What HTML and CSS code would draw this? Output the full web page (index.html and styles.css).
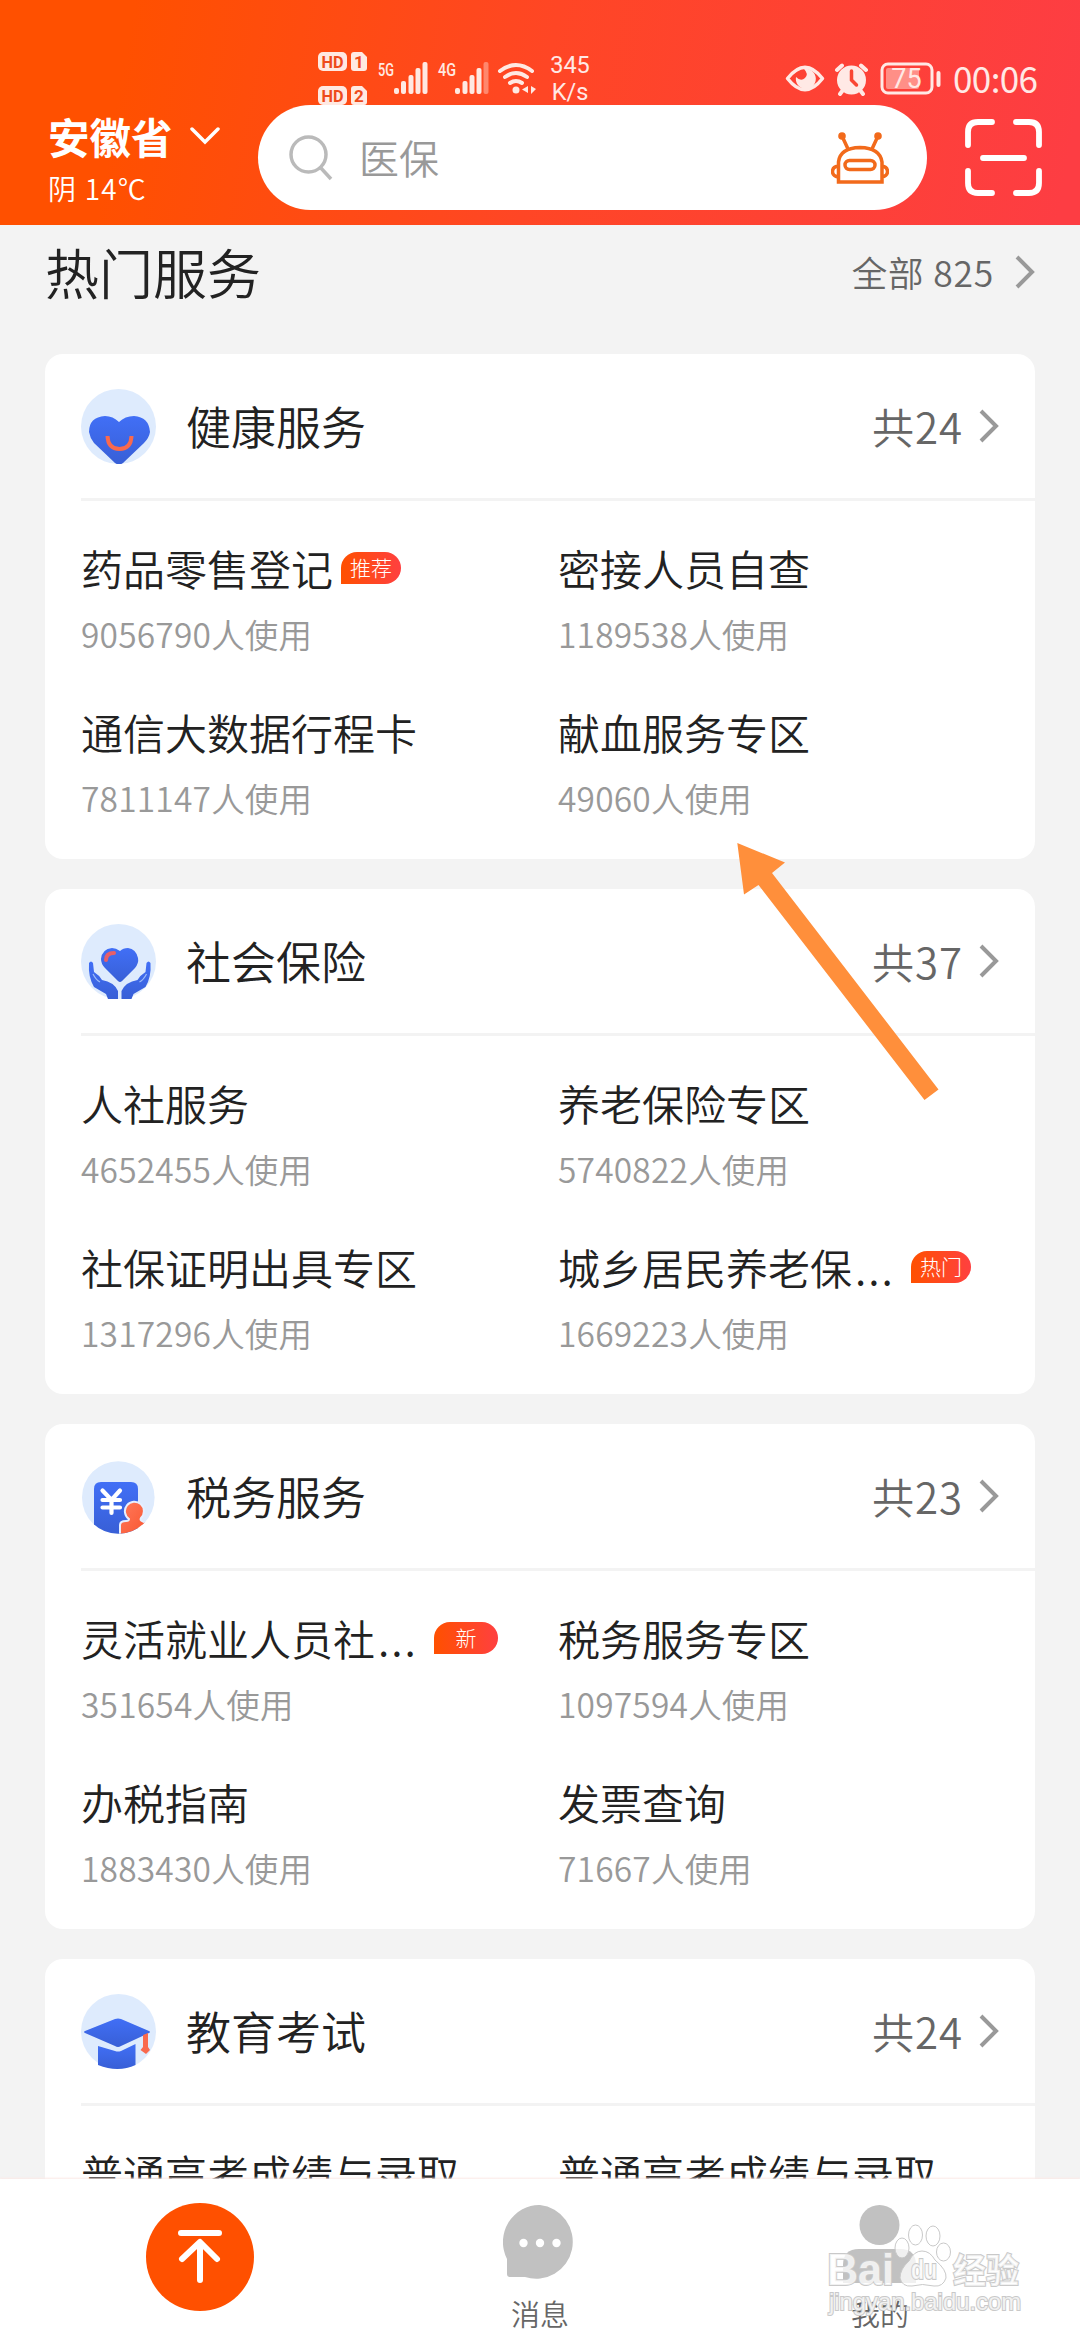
FILE: index.html
```html
<!DOCTYPE html>
<html lang="zh-CN">
<head>
<meta charset="utf-8">
<title>热门服务</title>
<link rel="stylesheet" href="styles.css">
</head>
<body>
<svg class="defs" width="0" height="0" aria-hidden="true">
  <defs>
    <linearGradient id="blue" x1="0" y1="0" x2="0" y2="1"><stop offset="0" stop-color="#416ff6"/><stop offset="1" stop-color="#385fd6"/></linearGradient>
    <linearGradient id="coral" x1="0" y1="0" x2="1" y2="1"><stop offset="0" stop-color="#ff7a5c"/><stop offset="1" stop-color="#f9552f"/></linearGradient>
    <clipPath id="disc"><circle cx="37.3" cy="38.5" r="36.3"/></clipPath>
    <symbol id="chev" viewBox="0 0 20 36"><path d="M2 3L17 18L2 33" fill="none" stroke="#999" stroke-width="4"/></symbol>
  </defs>
</svg>
<header class="header">
  <div class="status">
    <svg class="signals" width="222" height="55" viewBox="318 50 222 55">
      <g fill="#ffe9e2">
        <rect x="318" y="52" width="29" height="19" rx="5"/><path d="M354 52h8l5 5v11a3 3 0 0 1-3 3h-10a3 3 0 0 1-3-3v-13a3 3 0 0 1 3-3z"/>
        <rect x="318" y="86" width="29" height="19" rx="5"/><path d="M354 86h8l5 5v11a3 3 0 0 1-3 3h-10a3 3 0 0 1-3-3v-13a3 3 0 0 1 3-3z"/>
        <rect x="394" y="88" width="5" height="6" rx="2"/><rect x="401" y="81" width="5" height="13" rx="2"/><rect x="408.500" y="75" width="5" height="19" rx="2"/><rect x="415.500" y="68" width="5" height="26" rx="2"/><rect x="422.500" y="62" width="5" height="32" rx="2"/>
        <rect x="455" y="88" width="5" height="6" rx="2"/><rect x="462.500" y="81" width="5" height="13" rx="2"/><rect x="469.500" y="75" width="5" height="19" rx="2"/><rect x="476.500" y="68" width="5" height="26" rx="2"/><rect x="483.500" y="62" width="5" height="32" rx="2" opacity=".4"/>
        <circle cx="516" cy="90" r="3.500"/><path d="M528 86v7l-6-3.500zM531 86v8l5-5z"/>
      </g>
      <g fill="none" stroke="#ffe9e2" stroke-width="4" stroke-linecap="round"><path d="M500 71q16-12 32 0M505 77q11-8 22 0M510 83q6-4 12 0"/></g>
      <g class="hd" fill="#ee4a1b" text-anchor="middle"><text x="332.500" y="68" textLength="22" lengthAdjust="spacingAndGlyphs">HD</text><text x="359" y="68">1</text><text x="332.500" y="102" textLength="22" lengthAdjust="spacingAndGlyphs">HD</text><text x="359" y="102">2</text></g>
      <g class="net" fill="#ffe9e2"><text x="378" y="76" textLength="16" lengthAdjust="spacingAndGlyphs">5G</text><text x="438" y="76" textLength="18" lengthAdjust="spacingAndGlyphs">4G</text></g>
    </svg>
    <div class="speed"><span>345</span><span>K/s</span></div>
    <svg class="indicators" width="156" height="36" viewBox="784 60 156 36">
      <path d="M786.500 78.500Q804 56 821.500 78.500Q804 101 786.500 78.500Z" fill="none" stroke="#ffe9e5" stroke-width="3.500" stroke-linejoin="round"/>
      <path d="M803 69a10 10 0 1 1-8 8q5 5 9 1t-1-9z" fill="#ffe9e5"/>
      <circle cx="850.500" cy="80" r="14.500" fill="#ffe9e5"/><path d="M850.500 71v9l5 5" fill="none" stroke="#fa4633" stroke-width="3.500" stroke-linecap="round"/>
      <path d="M836 70l5-4.500M865 70l-5-4.500M839 94l3-4M862 94l-3-4" stroke="#ffe9e5" stroke-width="4" stroke-linecap="round"/>
      <rect x="881" y="64" width="50" height="29" rx="6" fill="none" stroke="#ffe9e5" stroke-width="3"/><rect x="885" y="68" width="33" height="21" rx="2" fill="#ff8f87"/><rect x="935.500" y="71" width="4" height="16" rx="2" fill="#ffe9e5"/>
      <text class="battery" x="905.500" y="88" text-anchor="middle" fill="#ffe9e5">75</text>
    </svg>
    <time class="clock">00:06</time>
  </div>
  <div class="toolbar">
    <div class="place">
      <div class="province">安徽省<svg width="30" height="20" viewBox="0 0 30 20"><path d="M2 3L15 16L28 3" fill="none" stroke="#fff" stroke-width="3.500" stroke-linecap="round"/></svg></div>
      <div class="weather">阴 14℃</div>
    </div>
    <div class="search">
      <svg width="44" height="46" viewBox="0 0 44 46" fill="none" stroke="#bababa" stroke-width="3.500"><circle cx="19.500" cy="19.500" r="17.500"/><path d="M31 32L42 44"/></svg>
      <span class="query">医保</span>
      <svg class="robot" width="58" height="52" viewBox="0 0 58 52" fill="none" stroke="#f26a1b" stroke-width="3.500"><path d="M7.500 50V30Q9 16 29 15.500Q49 16 51 30V50ZM17 17L11 4M41 17L47 4M7 34Q1.500 35 1.500 39.500T7 45M51 34Q56.500 35 56.500 39.500T51 45"/><rect x="14" y="28.500" width="30" height="9" rx="4.500"/><g fill="#f26a1b" stroke="none"><circle cx="11" cy="4" r="3.800"/><circle cx="47" cy="4" r="3.800"/></g></svg>
    </div>
    <svg class="scan" width="80" height="80" viewBox="0 0 80 80" fill="none" stroke="#fff" stroke-width="5.800" stroke-linecap="round"><path d="M4 27V14Q4 4 14 4H28M52 4H65Q75 4 75 14V27M4 53V65Q4 75 14 75H28M52 75H65Q75 75 75 65V53M19 40H60"/></svg>
  </div>
</header>
<main class="content">
  <div class="heading"><h1>热门服务</h1><div class="all">全部 825<svg width="20" height="36"><use href="#chev"/></svg></div></div>
  <section class="card">
    <div class="card-head">
      <svg class="icon" width="75" height="75" viewBox="0 0 75 75"><circle cx="37.500" cy="37.500" r="37.500" fill="#deebfd"/><path d="M38 33Q32 27 24 27Q8 28 8 43Q9 49 13 54L34 74Q38 77 42 74L63 54Q68 49 69 43Q68 28 53 27Q44 27 38 33Z" fill="url(#blue)"/><path d="M26.500 47Q27 60 38.500 60Q50 60 50.500 47" fill="none" stroke="#f9694d" stroke-width="4"/></svg>
      <h2>健康服务</h2><span class="total">共24</span><svg width="20" height="36"><use href="#chev"/></svg>
    </div>
    <div class="grid">
      <div class="item"><div class="name">药品零售登记<b class="badge">推荐</b></div><div class="count">9056790人使用</div></div>
      <div class="item"><div class="name">密接人员自查</div><div class="count">1189538人使用</div></div>
      <div class="item"><div class="name">通信大数据行程卡</div><div class="count">7811147人使用</div></div>
      <div class="item"><div class="name">献血服务专区</div><div class="count">49060人使用</div></div>
    </div>
  </section>
  <section class="card">
    <div class="card-head">
      <svg class="icon" width="75" height="75" viewBox="0 0 75 75"><circle cx="37.500" cy="37.500" r="37.500" fill="#deebfd"/><path d="M39 27Q35 24 31 24Q21 25 20 35Q20 40 24 44L37 57Q39 59 41 57L54 44Q58 39 57 34Q55 25 47 24Q42 24 39 27Z" fill="url(#blue)"/><path d="M25 36Q25 29 33 29" fill="none" stroke="#e95f68" stroke-width="4" stroke-linecap="round"/><path id="hand" d="M8 39Q10 36 12 39L13 48Q18 51 21 56Q33 58 37 67V75H27L25 70L13 63Q7 53 8 39Z" fill="url(#blue)"/><use href="#hand" transform="matrix(-1 0 0 1 77.500 0)"/><path d="M12 50Q15 56 19 58M65.500 50Q62.500 56 58.500 58" fill="none" stroke="#9dbcf8" stroke-width="1.200"/></svg>
      <h2>社会保险</h2><span class="total">共37</span><svg width="20" height="36"><use href="#chev"/></svg>
    </div>
    <div class="grid">
      <div class="item"><div class="name">人社服务</div><div class="count">4652455人使用</div></div>
      <div class="item"><div class="name">养老保险专区</div><div class="count">5740822人使用</div></div>
      <div class="item"><div class="name">社保证明出具专区</div><div class="count">1317296人使用</div></div>
      <div class="item"><div class="name">城乡居民养老保<i class="dots">...</i><b class="badge">热门</b></div><div class="count">1669223人使用</div></div>
    </div>
  </section>
  <section class="card">
    <div class="card-head">
      <svg class="icon" width="75" height="75" viewBox="0 0 75 75"><g clip-path="url(#disc)"><rect width="75" height="75" fill="#deebfd"/><path d="M13 75V30Q13 23 20 23H50Q57 23 57 30V75Z" fill="url(#blue)"/><path d="M21.500 31.500L30.500 41L39 31.500M21.500 41H39M21.500 48.500H39M30.500 41V54" fill="none" stroke="#fff" stroke-width="4.200" stroke-linecap="round"/><path d="M48 60A9.500 9.500 0 1 1 60 59Q58 62 66 64V76H39V66Q39 62 45 62Q48 62 48 60Z" fill="url(#coral)" stroke="#e6efff" stroke-width="2"/></g></svg>
      <h2>税务服务</h2><span class="total">共23</span><svg width="20" height="36"><use href="#chev"/></svg>
    </div>
    <div class="grid">
      <div class="item"><div class="name">灵活就业人员社<i class="dots">...</i><b class="badge wide">新</b></div><div class="count">351654人使用</div></div>
      <div class="item"><div class="name">税务服务专区</div><div class="count">1097594人使用</div></div>
      <div class="item"><div class="name">办税指南</div><div class="count">1883430人使用</div></div>
      <div class="item"><div class="name">发票查询</div><div class="count">71667人使用</div></div>
    </div>
  </section>
  <section class="card">
    <div class="card-head">
      <svg class="icon" width="75" height="75" viewBox="0 0 75 75"><circle cx="37.500" cy="37.500" r="37.500" fill="#deebfd"/><path d="M4 37L34 25Q37 24 40 25L68 37Q70 38 68 39L40 52Q37 54 34 52L4 39Q2 38 4 37Z" fill="url(#blue)"/><path d="M17 52L34 57Q37 58 40 57L54.500 50V71Q37 79 17 71Z" fill="url(#blue)"/><path d="M62 41L67 39V53L69 56L65 60L59.500 56L62 53Z" fill="#f9694d"/></svg>
      <h2>教育考试</h2><span class="total">共24</span><svg width="20" height="36"><use href="#chev"/></svg>
    </div>
    <div class="grid">
      <div class="item"><div class="name">普通高考成绩与录取</div></div>
      <div class="item"><div class="name">普通高考成绩与录取</div></div>
    </div>
  </section>
</main>
<nav class="tabs">
  <div class="tab top"><svg width="108" height="108" viewBox="0 0 108 108"><circle cx="54" cy="54" r="54" fill="#ff5000"/><path d="M35 30H73M54 77V40M36 56L54 39L71 56" fill="none" stroke="#fff" stroke-width="6" stroke-linecap="round" stroke-linejoin="round"/></svg></div>
  <div class="tab"><svg width="74" height="76" viewBox="0 0 74 76"><path d="M37 0A36.500 37 0 1 1 22 72H7Q4 72 4 69V54A36.500 37 0 0 1 37 0Z" fill="#c1c1c1"/><g fill="#fff"><circle cx="20.500" cy="38" r="4.200"/><circle cx="37" cy="38" r="4.200"/><circle cx="53.500" cy="38" r="4.200"/></g></svg><span>消息</span></div>
  <div class="tab"><svg width="74" height="79" viewBox="0 0 74 79"><circle cx="36.500" cy="20" r="20" fill="#c1c1c1"/><path d="M0 78V60Q0 44 16 44H57Q73 44 73 60V78Z" fill="#c1c1c1"/></svg><span>我的</span></div>
</nav>
<svg class="arrow" width="202" height="258" viewBox="737 843 202 258"><path d="M737.300 843L785 862.500L772 873L938.500 1089.500L924.500 1100L758.500 885L744 894.500Z" fill="#ff8f3b"/></svg>
<svg class="watermark" width="204" height="100" viewBox="822 2220 204 100">
  <g fill="#fff" fill-opacity=".75" stroke="#c9c9c9" stroke-width="1">
    <ellipse cx="902" cy="2248" rx="7" ry="10"/><ellipse cx="915.500" cy="2235" rx="7" ry="10"/><ellipse cx="933" cy="2236" rx="7" ry="10"/><ellipse cx="943.500" cy="2252" rx="7" ry="9"/>
    <path d="M922 2251Q930 2251 935 2260Q947 2270 946 2278Q943 2287 934 2286Q922 2283 912 2286Q902 2287 900 2278Q900 2269 909 2261Q914 2251 922 2251Z"/>
    <g paint-order="stroke" stroke-width="2"><text class="logo" x="827" y="2285" textLength="67" lengthAdjust="spacingAndGlyphs">Bai</text><text class="logo du" x="911" y="2279" textLength="26" lengthAdjust="spacingAndGlyphs">du</text><text class="logo cn" x="953" y="2283" textLength="66" lengthAdjust="spacingAndGlyphs">经验</text><text class="url" x="829" y="2310" textLength="192" lengthAdjust="spacingAndGlyphs">jingyan.baidu.com</text></g>
  </g>
</svg>
</body>
</html>
```
FILE: styles.css
```css
* { box-sizing: border-box; }
body {
  position: relative;
  display: flex;
  flex-direction: column;
  width: 1080px;
  height: 2340px;
  margin: 0;
  overflow: hidden;
  background: #f3f3f3;
  color: #222;
  font-family: "Noto Sans CJK SC", "Noto Sans", sans-serif;
  font-weight: 350;
}
svg { display: block; flex: none; }
.defs { position: absolute; }
h1, h2 { margin: 0; font-weight: 350; }

.header {
  flex: none;
  height: 225px;
  background: linear-gradient(100deg, #ff5000 12%, #ff4625 50%, #fd3d43 98%);
  color: #fff;
}
.status { display: flex; height: 105px; padding: 50px 0 0 318px; color: #ffe9e5; overflow: hidden; }
.hd { font: 700 17px Roboto, sans-serif; }
.net { font: 500 18px Roboto, sans-serif; }
.speed { display: flex; flex-direction: column; width: 60px; margin-right: 179px; padding-top: 2px; font: 400 23.500px/27px Roboto, sans-serif; text-align: center; }
.indicators { margin: 10px 12px 0 6px; }
.battery { font: 400 27px Roboto, sans-serif; }
.clock { margin-top: 9px; font: 400 35px/38px "Noto Sans CJK SC", sans-serif; letter-spacing: -.6px; }

.toolbar { display: flex; align-items: center; height: 105px; padding-left: 48px; }
.place { width: 210px; }
.province { display: flex; align-items: center; gap: 17px; height: 54px; font-size: 41.500px; font-weight: 700; line-height: 54px; }
.weather { height: 38px; margin-top: 6px; font-size: 28px; line-height: 38px; letter-spacing: 1.200px; white-space: pre; }
.search { display: flex; align-items: center; width: 669px; height: 105px; padding: 0 38px 0 31px; border-radius: 53px; background: #fff; }
.query { flex: 1; margin: -1px 0 0 26px; color: #999; font-size: 40px; line-height: 60px; }
.scan { margin-left: 37px; }

.content { flex: 1; min-height: 0; padding: 0 45px; overflow: hidden; }
.heading { display: flex; align-items: center; justify-content: space-between; height: 94px; margin-bottom: 35px; }
.heading h1 { font-size: 54px; line-height: 80px; }
.all { display: flex; align-items: center; gap: 21px; color: #666; font-size: 35.500px; line-height: 50px; letter-spacing: .8px; }

.card { height: 505px; margin-bottom: 30px; padding-left: 36px; border-radius: 18px; background: #fff; }
.card-head { display: flex; align-items: center; height: 147px; padding: 0 36px 0 0; border-bottom: 3px solid #f3f3f3; }
.card-head h2 { flex: 1; margin: -1px 0 0 30px; font-size: 45px; line-height: 66px; }
.total { margin: -1px 16px 0 0; color: #666; font-size: 42px; line-height: 60px; letter-spacing: 1px; }

.grid { display: grid; grid-template-columns: 477px 1fr; grid-auto-rows: 164px; padding-top: 36px; }
.name { display: flex; align-items: center; height: 62px; font-size: 42px; line-height: 62px; white-space: nowrap; }
.dots { margin: 0 16px 0 3px; font-style: normal; letter-spacing: 2px; }
.count { height: 50px; margin-top: 10px; color: #999; font-size: 33.500px; line-height: 50px; letter-spacing: .2px; }
.badge { width: 60px; height: 32px; margin: 0 0 1px 8px; border-radius: 16px 16px 16px 0; background: linear-gradient(90deg, #ff5000, #ff4040); color: #fff; font-size: 21px; font-weight: 300; line-height: 30px; text-align: center; }
.dots + .badge { margin-left: 0; }
.badge.wide { width: 64px; }

.tabs { display: flex; flex: none; height: 161px; padding: 0 30px; background: #fff; box-shadow: 0 -1px 2px #fbe9e7; }
.tab { display: flex; flex: 1; flex-direction: column; align-items: center; height: 161px; padding-top: 26px; color: #666; font-size: 29px; line-height: 42px; }
.tab.top { padding-top: 24px; }
.tab span { margin-top: auto; padding-bottom: 6px; }

.arrow { position: absolute; left: 737px; top: 843px; }
.watermark { position: absolute; left: 822px; top: 2220px; }
.logo { font: 700 45px "Liberation Sans", sans-serif; }
.logo.du { font-size: 28px; }
.logo.cn { font: 700 34px "Noto Sans CJK SC", sans-serif; }
.url { font: 400 24px "Liberation Sans", sans-serif; }
```
